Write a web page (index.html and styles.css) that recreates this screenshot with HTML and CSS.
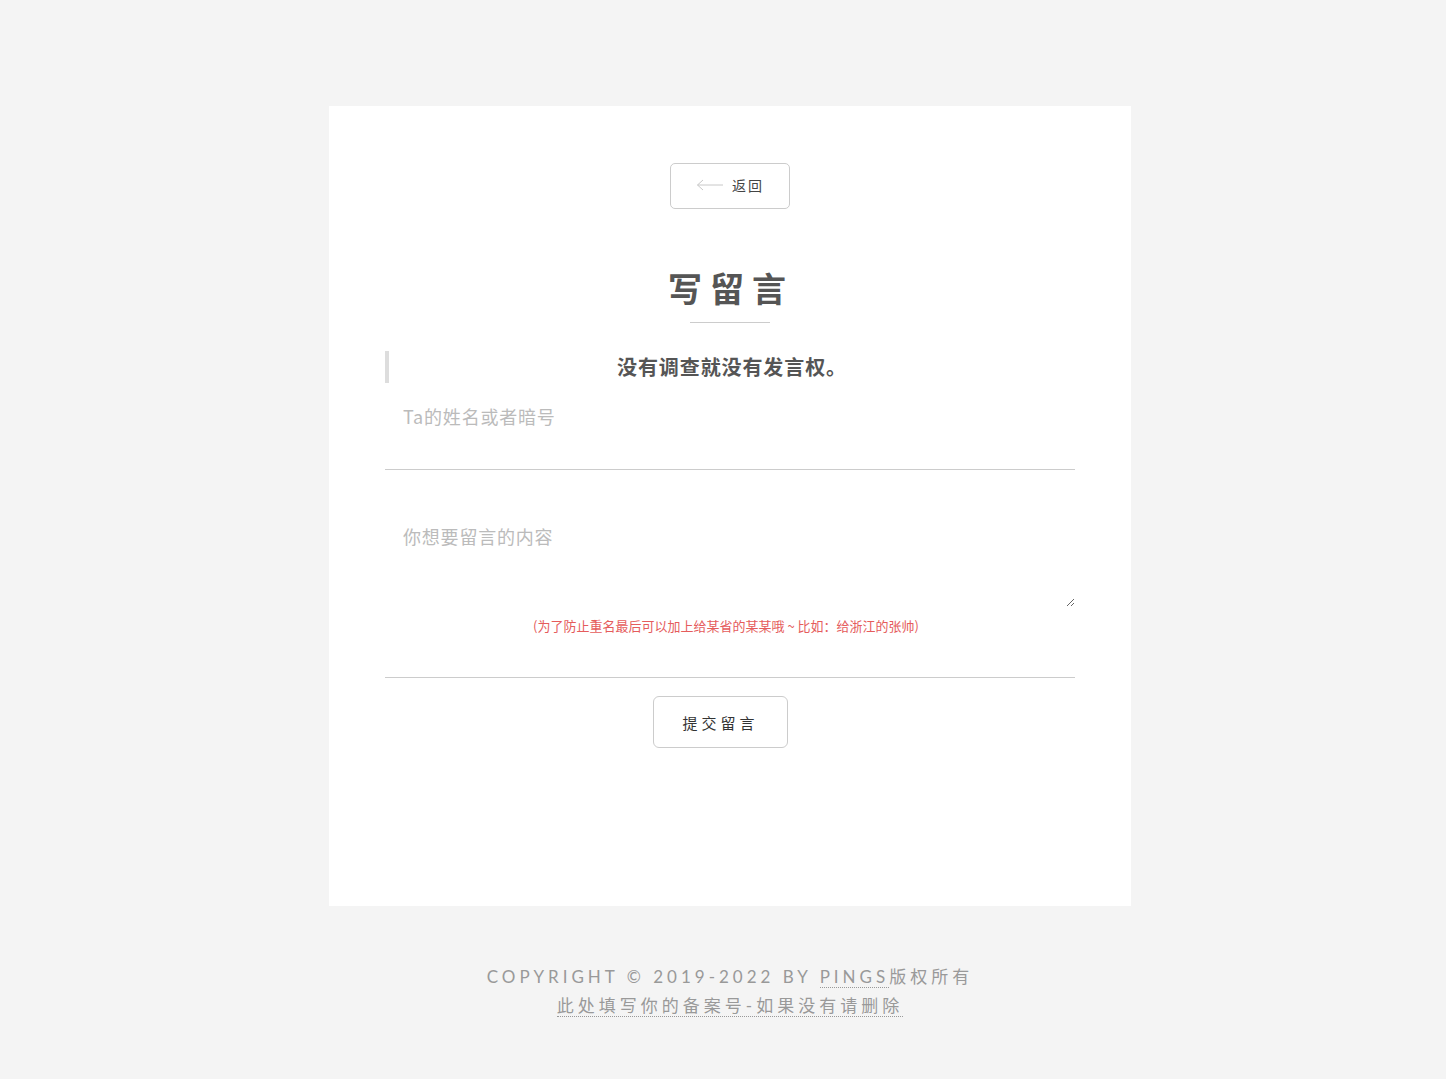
FILE: index.html
```html
<!DOCTYPE html>
<html lang="zh-CN">
<head>
<meta charset="utf-8">
<title>写留言</title>
<link rel="stylesheet" href="styles.css">
</head>
<body>
<div class="page">
  <main class="card">
    <div class="back-row">
      <a class="back-btn" href="#">
        <svg class="arrow" width="28" height="12" viewBox="0 0 28 12" aria-hidden="true">
          <path d="M27 6H1.5M7 1L1.5 6L7 11" fill="none" stroke="#c8c8c8" stroke-width="1"/>
        </svg>
        <span>返回</span>
      </a>
    </div>
    <h1 class="title">写留言</h1>
    <div class="title-line"></div>
    <blockquote class="quote">没有调查就没有发言权。</blockquote>
    <form class="form">
      <input class="name-input" type="text" placeholder="Ta的姓名或者暗号">
      <textarea class="msg-input" placeholder="你想要留言的内容"></textarea>
      <p class="hint">(为了防止重名最后可以加上给某省的某某哦 ~ 比如：给浙江的张帅)</p>
      <div class="submit-row">
        <button class="submit-btn" type="button">提交留言</button>
      </div>
    </form>
  </main>
  <footer class="footer">
    <p class="copy">COPYRIGHT © 2019-2022 BY <a class="dot" href="#">PINGS</a>版权所有</p>
    <p class="icp"><a class="dot" href="#">此处填写你的备案号-如果没有请删除</a></p>
  </footer>
</div>
</body>
</html>
```
FILE: styles.css
```css
html, body {
  margin: 0;
  padding: 0;
  background: #f4f4f4;
}
body {
  font-family: "Noto Sans CJK SC", "Noto Sans", sans-serif;
  color: #555;
}
.page {
  padding: 106px 0 40px 14px;
}
.card {
  width: 802px;
  height: 800px;
  box-sizing: border-box;
  margin: 0 auto;
  background: #fff;
  padding: 57px 56px 0;
}
.back-row {
  display: flex;
  justify-content: center;
}
.back-btn {
  display: flex;
  align-items: center;
  justify-content: center;
  gap: 8px;
  width: 120px;
  height: 46px;
  box-sizing: border-box;
  border: 1px solid #ccc;
  border-radius: 5px;
  text-decoration: none;
  color: #444;
  font-size: 14px;
  line-height: 14px;
  letter-spacing: 2px;
  padding: 0 0 3px 0;
}
.title {
  margin: 62px 0 0;
  text-align: center;
  font-size: 34px;
  line-height: 34px;
  font-weight: 700;
  letter-spacing: 8px;
  color: #555;
  padding-left: 2px;
}
.title-line {
  width: 80px;
  height: 1px;
  background: #ccc;
  margin: 17px auto 0;
}
.quote {
  margin: 28px 0 0;
  border-left: 4px solid #ddd;
  height: 32px;
  line-height: 32px;
  text-align: center;
  font-size: 20px;
  font-weight: 700;
  color: #555;
  letter-spacing: 0.9px;
}
.form {
  display: flex;
  flex-direction: column;
}
.name-input {
  display: block;
  width: 100%;
  height: 87px;
  box-sizing: border-box;
  border: 0;
  border-bottom: 1px solid #ccc;
  padding: 0 18px 20px;
  font-family: inherit;
  font-size: 18px;
  letter-spacing: 0.8px;
  color: #555;
  outline: none;
  background: transparent;
}
.msg-input {
  display: block;
  width: 100%;
  height: 117px;
  box-sizing: border-box;
  margin-top: 20px;
  border: 0;
  padding: 33px 18px 0;
  font-family: inherit;
  font-size: 18px;
  letter-spacing: 0.8px;
  line-height: 26px;
  color: #555;
  outline: none;
  background: transparent;
}
.name-input::placeholder,
.msg-input::placeholder {
  color: #bbb;
}
.hint {
  margin: 10px 0 0;
  padding: 0 8px 42px 0;
  border-bottom: 1px solid #ccc;
  text-align: center;
  font-size: 13px;
  line-height: 18px;
  color: #e55c5c;
}
.submit-row {
  display: flex;
  justify-content: center;
  padding-top: 18px;
}
.submit-btn {
  width: 135px;
  height: 52px;
  box-sizing: border-box;
  border: 1px solid #ccc;
  border-radius: 6px;
  background: #fff;
  font-family: inherit;
  font-size: 15px;
  letter-spacing: 4px;
  color: #333;
  margin-right: 19px;
  padding-left: 6px;
}
.footer {
  margin-top: 56px;
  text-align: center;
  font-family: "Lato", "Noto Sans CJK SC", sans-serif;
  font-size: 17px;
  line-height: 29px;
  letter-spacing: 4px;
  color: #999;
}
.footer p {
  margin: 0;
}
.dot {
  color: #999;
  text-decoration: none;
  border-bottom: 1px dotted #999;
}
```
